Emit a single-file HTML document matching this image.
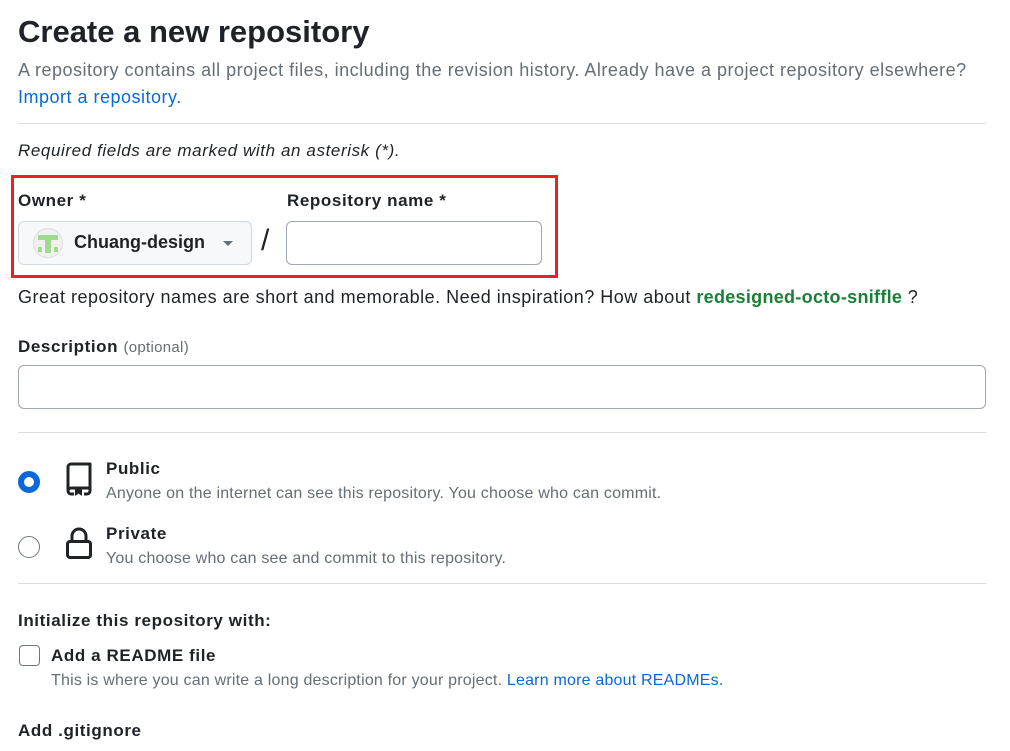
<!DOCTYPE html>
<html><head><meta charset="utf-8"><style>
*{margin:0;padding:0;box-sizing:border-box}
body{width:1010px;height:751px;overflow:hidden;background:#fff;font-family:"Liberation Sans",sans-serif;color:#1f2328;position:relative}
.a{position:absolute;white-space:nowrap}
.hr{position:absolute;left:18px;width:968px;height:1px;background:#d8dee4}
.muted{color:#656d76}
.link{color:#0969da}
b{font-weight:600}
.body{font-size:18px;letter-spacing:0.5px}
.lbl{font-size:17px;font-weight:600;letter-spacing:0.6px}
.small{font-size:16px;letter-spacing:0.2px}
</style></head><body>
<div class="a" style="left:18px;top:14px;font-size:31px;font-weight:600">Create a new repository</div>
<div class="a muted body" style="left:18px;top:60px">A repository contains all project files, including the revision history. Already have a project repository elsewhere?</div>
<div class="a link body" style="left:18px;top:87px">Import a repository.</div>
<div class="hr" style="top:123px"></div>
<div class="a" style="left:18px;top:141px;font-size:17px;letter-spacing:0.6px;font-style:italic">Required fields are marked with an asterisk (*).</div>
<div class="a" style="left:11px;top:175px;width:547px;height:103px;border:3px solid #f0201a"></div>
<div class="a lbl" style="left:18px;top:191px">Owner *</div>
<div class="a lbl" style="left:287px;top:191px">Repository name *</div>
<div class="a" style="left:18px;top:221px;width:234px;height:44px;border:1px solid #d0d7de;border-radius:6px;background:#f6f8fa"></div>
<div class="a" style="left:33px;top:228px;width:30px;height:30px;border-radius:50%;background:#f0f0f0;border:1px solid #ddd;overflow:hidden">
<div style="position:absolute;left:4px;top:6px;width:20px;height:5px;background:#9ddc8c"></div>
<div style="position:absolute;left:11px;top:6px;width:6px;height:18px;background:#9ddc8c"></div>
<div style="position:absolute;left:4px;top:18px;width:4px;height:5px;background:#9ddc8c"></div>
<div style="position:absolute;left:20px;top:18px;width:4px;height:5px;background:#9ddc8c"></div>
</div>
<div class="a" style="left:74px;top:232px;font-size:18px;font-weight:600">Chuang-design</div>
<div class="a" style="left:223px;top:241px;border-left:5px solid transparent;border-right:5px solid transparent;border-top:5px solid #656d76"></div>
<div class="a" style="left:261px;top:224px;font-size:30px">/</div>
<div class="a" style="left:286px;top:221px;width:256px;height:44px;border:1px solid #a0a7b0;border-radius:6px"></div>
<div class="a body" style="left:18px;top:287px">Great repository names are short and memorable. Need inspiration? How about <b style="color:#1a7f37;letter-spacing:0.3px">redesigned-octo-sniffle</b> ?</div>
<div class="a lbl" style="left:18px;top:337px">Description <span class="muted" style="font-size:15px;font-weight:400;letter-spacing:0.3px">(optional)</span></div>
<div class="a" style="left:18px;top:365px;width:968px;height:44px;border:1px solid #a0a7b0;border-radius:6px"></div>
<div class="hr" style="top:432px"></div>
<div class="a" style="left:18px;top:471px;width:22px;height:22px;border-radius:50%;border:6px solid #0969da"></div>
<svg class="a" style="left:64px;top:461px" width="30" height="36" viewBox="0 0 30 36"><path d="M4 29V6a3 3 0 0 1 3-3h19v24H7a3 3 0 0 0-3 3v0a3 3 0 0 0 3 3h3M20 33h3a3 3 0 0 0 3-3v-3" fill="none" stroke="#1f2328" stroke-width="3" stroke-linejoin="round"/><path d="M11 28h7v7l-3.5-2.5L11 35z" fill="#1f2328"/></svg>
<div class="a lbl" style="left:106px;top:459px">Public</div>
<div class="a muted small" style="left:106px;top:485px">Anyone on the internet can see this repository. You choose who can commit.</div>
<div class="a" style="left:18px;top:536px;width:22px;height:22px;border-radius:50%;border:1px solid #6e7781"></div>
<svg class="a" style="left:64px;top:526px" width="30" height="36" viewBox="0 0 30 36"><path d="M8 15V10a7 7 0 0 1 14 0v5" fill="none" stroke="#1f2328" stroke-width="3"/><rect x="3.5" y="15.5" width="23" height="16" rx="2.5" fill="none" stroke="#1f2328" stroke-width="3"/></svg>
<div class="a lbl" style="left:106px;top:524px">Private</div>
<div class="a muted small" style="left:106px;top:550px">You choose who can see and commit to this repository.</div>
<div class="hr" style="top:583px"></div>
<div class="a lbl" style="left:18px;top:611px">Initialize this repository with:</div>
<div class="a" style="left:19px;top:645px;width:21px;height:21px;border:1px solid #6e7781;border-radius:4px"></div>
<div class="a lbl" style="left:51px;top:646px">Add a README file</div>
<div class="a muted small" style="left:51px;top:672px">This is where you can write a long description for your project. <span class="link">Learn more about READMEs.</span></div>
<div class="a lbl" style="left:18px;top:721px">Add .gitignore</div>
</body></html>
